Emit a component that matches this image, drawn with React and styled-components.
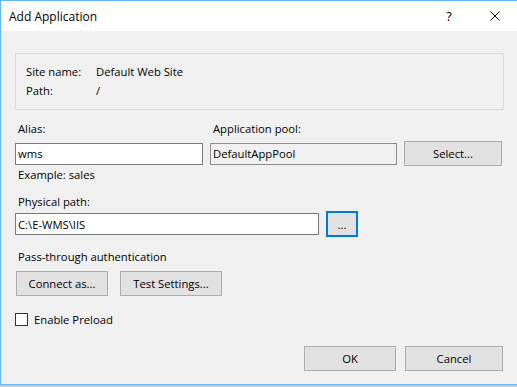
import React from "react";
import styled, { createGlobalStyle } from "styled-components";

const Global = createGlobalStyle`
  html, body { margin: 0; padding: 0; background: #c9c9c9; }
  body { font-family: "Open Sans", "Liberation Sans", sans-serif; font-size: 11.25px; line-height: 15px; color: #000; }
  #root { width: 517px; height: 387px; overflow: hidden; }
`;

const Window = styled.div`
  width: 540px;
  height: 383px;
  border: 1px solid #6ab6ee;
  border-right: none;
  background: #f0f0f0;
  display: flex;
  flex-direction: column;
`;

const TitleBar = styled.div`
  height: 30px;
  background: #fff;
  display: flex;
  align-items: center;
  padding-left: 8px;
  flex-shrink: 0;
`;

const Title = styled.div`
  font-size: 12px;
  flex: 1;
`;

const TitleBtn = styled.div`
  width: ${p => p.$w}px;
  height: 30px;
  display: flex;
  align-items: center;
  justify-content: center;
  font-size: 13px;
`;

const Body = styled.div`
  flex: 1;
  padding: 22px 0 0 14px;
  width: 489px;
`;

const GroupBox = styled.div`
  border: 1px solid #dcdcdc;
  padding: 8px 10px 0;
  box-sizing: border-box;
  height: 57px;
  display: grid;
  grid-template-columns: 70px auto;
  grid-auto-rows: 19px;
  align-items: center;
`;

const FieldGrid = styled.div`
  margin-top: 11px;
  display: grid;
  grid-template-columns: 188px 187px 98px;
  column-gap: 7px;
  row-gap: 4px;
  align-items: center;
`;

const Label = styled.div`
  line-height: 16px;
  height: 16px;
  padding-left: ${p => p.$indent ?? 3}px;
  margin-top: ${p => p.$mt ?? 0}px;
`;

const TextBox = styled.div`
  box-sizing: border-box;
  height: 22px;
  width: ${p => (p.$w ? `${p.$w}px` : "auto")};
  border: 1px solid ${p => (p.$readonly ? "#8c8c8c" : "#7a7a7a")};
  background: ${p => (p.$readonly ? "#f0f0f0" : "#fff")};
  padding-left: 2px;
  display: flex;
  align-items: center;
  white-space: nowrap;
`;

const Button = styled.div`
  box-sizing: border-box;
  width: ${p => p.$w}px;
  height: ${p => p.$h ?? 25}px;
  background: #e1e1e1;
  border: ${p => (p.$focus ? "2px solid #0078d7" : "1px solid #adadad")};
  display: flex;
  align-items: center;
  justify-content: center;
`;

const Row = styled.div`
  display: flex;
  align-items: center;
  gap: ${p => p.$gap ?? 0}px;
  margin-top: ${p => p.$mt ?? 0}px;
  margin-left: ${p => p.$ml ?? 0}px;
  justify-content: ${p => p.$justify ?? "flex-start"};
`;

const Check = styled.div`
  box-sizing: border-box;
  width: 13px;
  height: 13px;
  border: 1px solid #333;
  background: #fff;
`;

export default function App() {
  return (
    <>
      <Global />
      <Window>
        <TitleBar>
          <Title>Add Application</Title>
          <TitleBtn $w={46}>?</TitleBtn>
          <TitleBtn $w={46}>
            <svg width="10" height="10" viewBox="0 0 10 10">
              <path d="M0.5 0.5 L9.5 9.5 M9.5 0.5 L0.5 9.5" stroke="#000" strokeWidth="1" fill="none" />
            </svg>
          </TitleBtn>
          <div style={{ width: 23 }} />
        </TitleBar>
        <Body>
          <GroupBox>
            <span>Site name:</span>
            <span>Default Web Site</span>
            <span>Path:</span>
            <span>/</span>
          </GroupBox>
          <FieldGrid>
            <Label>Alias:</Label>
            <Label>Application pool:</Label>
            <div />
            <TextBox>wms</TextBox>
            <TextBox $readonly>DefaultAppPool</TextBox>
            <Button $w={98}>Select...</Button>
          </FieldGrid>
          <Label $mt={1}>Example: sales</Label>
          <Label $mt={11}>Physical path:</Label>
          <Row $gap={7} $mt={1}>
            <TextBox $w={304}>C:\E-WMS\IIS</TextBox>
            <Button $w={32} $h={26} $focus>...</Button>
          </Row>
          <Label $mt={12}>Pass-through authentication</Label>
          <Row $gap={12} $mt={6} $ml={1}>
            <Button $w={92}>Connect as...</Button>
            <Button $w={102}>Test Settings...</Button>
          </Row>
          <Row $gap={6} $mt={16}>
            <Check />
            <span>Enable Preload</span>
          </Row>
          <Row $gap={9} $mt={19} $justify="flex-end" style={{ width: 488 }}>
            <Button $w={92}>OK</Button>
            <Button $w={98}>Cancel</Button>
          </Row>
        </Body>
      </Window>
    </>
  );
}
